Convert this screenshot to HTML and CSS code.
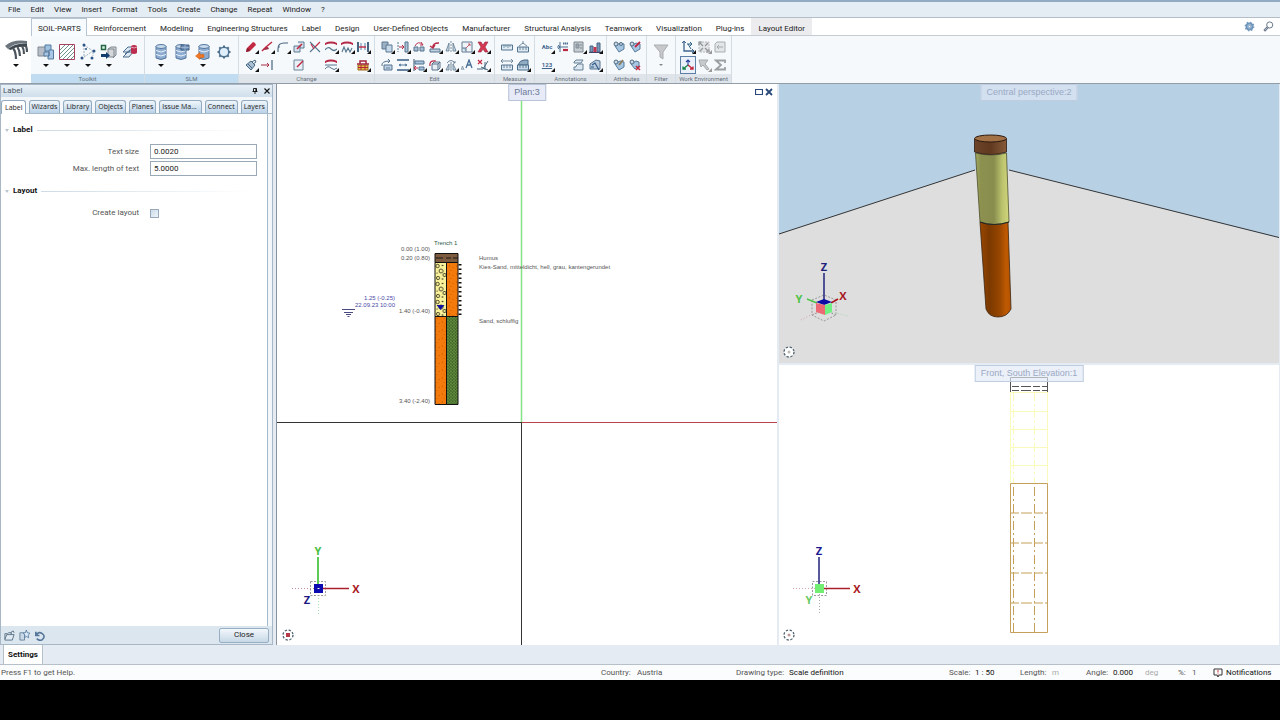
FILE: index.html
```html
<!DOCTYPE html>
<html lang="en">
<head>
<meta charset="utf-8">
<title>Soil parts - Label</title>
<meta name="viewport" content="width=device-width, initial-scale=1">
<link rel="stylesheet" href="styles.css">
</head>
<body>
<svg class="symbols" aria-hidden="true">
  <defs>
    <pattern id="sand" width="7" height="8" patternUnits="userSpaceOnUse"><rect width="7" height="8" fill="#f47a0c"/><circle cx="1.5" cy="2" r=".45" fill="#6b3206"/><circle cx="5" cy="3.6" r=".45" fill="#6b3206"/><circle cx="3" cy="6.3" r=".4" fill="#8a4208"/></pattern>
    <pattern id="silt" width="3" height="3" patternUnits="userSpaceOnUse"><rect width="3" height="3" fill="#618a3c"/><path d="M1 0v1.8M2.5 1.5V3" stroke="#30531f" stroke-width=".8"/></pattern>
    <pattern id="gravel" width="11.5" height="18" patternUnits="userSpaceOnUse" x="435" y="263"><rect width="11.5" height="18" fill="#fbf39a"/><g fill="none" stroke="#38351c" stroke-width=".9"><circle cx="2.500" cy="3" r="1.700"/><circle cx="6" cy="8" r="2"/><circle cx="9.500" cy="12" r="1.600"/><circle cx="3" cy="15" r="1.600"/></g><circle cx="7.500" cy="2.500" r=".7"/><circle cx="2" cy="10" r=".6"/><circle cx="7.500" cy="16" r=".7"/></pattern>
    <linearGradient id="orange3d"><stop offset="0" stop-color="#9a4700"/><stop offset=".3" stop-color="#7b3900"/><stop offset=".62" stop-color="#964500"/><stop offset=".85" stop-color="#c05a02"/><stop offset="1" stop-color="#b35202"/></linearGradient>
    <linearGradient id="green3d"><stop offset="0" stop-color="#a3a95e"/><stop offset=".15" stop-color="#8c9150"/><stop offset=".55" stop-color="#888d4e"/><stop offset=".8" stop-color="#bcc36d"/><stop offset="1" stop-color="#cfd67c"/></linearGradient>
    <linearGradient id="brown3d"><stop offset="0" stop-color="#6c4429"/><stop offset=".5" stop-color="#60391f"/><stop offset="1" stop-color="#875a3a"/></linearGradient>
  </defs>
  <symbol id="blocks" viewBox="0 0 18 18"><path d="M1 4h8v9H1z" fill="#b6bdc6" stroke="#7e8791"/><path d="M8 2h6v6H8z" fill="#9fc1e2" stroke="#54789c"/><path d="M7 9h5v4H7zM12 7h4.500v9H11v-3h1z" fill="#a9c7e4" stroke="#54789c"/></symbol>
  <symbol id="hatch" viewBox="0 0 18 18"><path d="M1.500 1.500h15v15h-15z" fill="#fff" stroke="#a83f5c"/><path d="M2 7l5-5M2 11l9-9M2 15l13-13M5 16L16 5M9 16l7-7M13 16l3-3" stroke="#497a70" stroke-width=".8" fill="none"/></symbol>
  <symbol id="nodes" viewBox="0 0 18 18"><path d="M5 2v12M5 14l9-6M5 2l9 6v5" stroke="#8b9daf" stroke-width=".8" stroke-dasharray="2 1" fill="none"/><g fill="#2b5687"><circle cx="5" cy="2" r="1.500"/><circle cx="3" cy="15" r="1.500"/><circle cx="15" cy="8" r="1.500"/><circle cx="13" cy="15" r="1.500"/><circle cx="7" cy="6" r="1"/></g></symbol>
  <symbol id="transfer" viewBox="0 0 18 18"><path d="M1.500 2.500h4v4h-4z" fill="#d9efe0" stroke="#246748" stroke-width="1.500"/><path d="M8 6l3-2h5v8l-3 3M8 6h6v8H8z" fill="#d4d8db" stroke="#7d868e"/><path d="M1 11h5V9l4 3.500-4 3.500v-2H1z" fill="#123e70"/></symbol>
  <symbol id="layers" viewBox="0 0 18 18"><path d="M2 9l5-5h5l-4 5zM2 14l5-5h5l-4 5zM4 11l5-4" fill="#dce8f2" stroke="#4c6d8e"/><path d="M10 3q3-2 6 0v7q-3 2-6 0z" fill="#bd2d4f"/><path d="M10 4q3 2 6 0" fill="none" stroke="#e0a6b3"/></symbol>
  <symbol id="db" viewBox="0 0 18 18"><path d="M4 3v12q5 3 10 0V3" fill="#8dacd0" stroke="#55779f"/><ellipse cx="9" cy="3.500" rx="5" ry="2" fill="#c7dbec" stroke="#55779f"/><path d="M4 7.500q5 3 10 0M4 11.500q5 3 10 0" stroke="#e8f2fb" fill="none"/></symbol>
  <symbol id="db-table" viewBox="0 0 18 18"><path d="M3 3v12q5 3 10 0V3" fill="#8dacd0" stroke="#55779f"/><ellipse cx="8" cy="3.500" rx="5" ry="2" fill="#c7dbec" stroke="#55779f"/><path d="M3 7.500q5 3 10 0M3 11.500q5 3 10 0" stroke="#e8f2fb" fill="none"/><path d="M8 2h8v5H8z" fill="#6f8fb5" stroke="#3f5f86"/><path d="M8 4.500h8M12 2v5" stroke="#a9c0da" stroke-width=".7"/></symbol>
  <symbol id="db-out" viewBox="0 0 18 18"><path d="M5 3v12q5 3 10 0V3" fill="#8dacd0" stroke="#55779f"/><ellipse cx="10" cy="3.500" rx="5" ry="2" fill="#c7dbec" stroke="#55779f"/><path d="M5 7.500q5 3 10 0" stroke="#e8f2fb" fill="none"/><path d="M10 11.500H6V9.500L1.500 13 6 16.500v-2h4z" fill="#f07825" stroke="#ce5c12" stroke-width=".5"/></symbol>
  <symbol id="gear" viewBox="0 0 18 18"><circle cx="9" cy="9" r="4.800" fill="#deeefa" stroke="#4f7190" stroke-width="1.500"/><path d="M9 2.500V4M9 14v1.500M2.500 9H4M14 9h1.500M4.300 4.300l1.200 1.200M12.500 12.500l1.200 1.200M4.300 13.700l1.200-1.200M12.500 5.500l1.200-1.200" stroke="#4f7190" stroke-width="2"/></symbol>
  <symbol id="pencil" viewBox="0 0 12 12"><path d="M1 11l1-4 6-6q2 0 3 3l-6 6z" fill="#c32843"/><path d="M1 11l1-4q2 0 3 3z" fill="#8a1b2e"/></symbol>
  <symbol id="trim" viewBox="0 0 12 12"><path d="M1 10l4-4 1.500 1.500M5 6l6-5" stroke="#c32843" stroke-width="1.500" fill="none"/><path d="M2 8l5-2 1 2-4 1z" fill="#9d3045"/></symbol>
  <symbol id="fillet" viewBox="0 0 12 12"><path d="M1 11V8q0-6 6-6h4" fill="none" stroke="#45637f" stroke-width="1.100"/><circle cx="2" cy="6" r=".8" fill="#45637f"/></symbol>
  <symbol id="edit-shape" viewBox="0 0 12 12"><path d="M1 5h6v6H1zM5 1h6v6H7" fill="#d6e2ec" stroke="#5b7894"/><path d="M4 8l5-5" stroke="#c32843" stroke-width="1.600"/></symbol>
  <symbol id="split" viewBox="0 0 12 12"><path d="M1 1l10 10M1 11L6 6" stroke="#55768f" stroke-width="1.100"/><path d="M6 6l5-5M2 3l3 5" stroke="#c32843" stroke-width="1.100"/></symbol>
  <symbol id="wave1" viewBox="0 0 12 12"><path d="M0 4V3q6-3 12 0v1" stroke="#b62845" stroke-width="1.800" fill="none"/><path d="M0 9q3-4 6-1t6 0" stroke="#55768f" fill="none" stroke-width="1.200"/></symbol>
  <symbol id="wave2" viewBox="0 0 12 12"><path d="M0 4V3q6-3 12 0v1" stroke="#b62845" stroke-width="1.800" fill="none"/><path d="M1 11l2-5 2 5 2-4 2 4 2-4" stroke="#55768f" fill="none" stroke-width="1.100"/></symbol>
  <symbol id="wave3" viewBox="0 0 12 12"><path d="M0 4V3q6-3 12 0v1" stroke="#b62845" stroke-width="1.800" fill="none"/><path d="M0 6h12M0 10q3-4 6-1t6 0" stroke="#55768f" fill="none"/></symbol>
  <symbol id="stretch" viewBox="0 0 12 12"><path d="M1 1v10M11 1v10" stroke="#466581" stroke-width="2"/><path d="M3 2h2v7H3zM7 2h2v7H7z" fill="#a8bfd3"/><path d="M2 6h7" stroke="#c32843" stroke-width="1.400"/></symbol>
  <symbol id="brush" viewBox="0 0 12 12"><path d="M1 6l5-4 4 4-4 5z" fill="#a9bfd2" stroke="#486885"/><path d="M7 3l3-2 1 2-3 2M3 5l4 4" fill="none" stroke="#486885"/></symbol>
  <symbol id="extend" viewBox="0 0 12 12"><path d="M11 1v10" stroke="#45637f" stroke-width="1.200"/><path d="M0 6h8M6 4l2 2-2 2" fill="none" stroke="#a82d48"/></symbol>
  <symbol id="note" viewBox="0 0 12 12"><path d="M1 1h9v10H1z" fill="#e8eff5" stroke="#6b849b"/><path d="M4 8l6-6" stroke="#c32843" stroke-width="1.500"/></symbol>
  <symbol id="wall" viewBox="0 0 12 12"><path d="M1 6h10v5H1z" fill="#e9bc45" stroke="#976b20"/><path d="M1 8.500h10M4 6v5M8 6v5" stroke="#b12435"/><path d="M3 5V2h6v3M0 5h12" stroke="#a4263c" stroke-width="1.500" fill="none"/></symbol>
  <symbol id="copy" viewBox="0 0 12 12"><path d="M1 1h6v7H1z" fill="#9eb3c5" stroke="#5b7790"/><path d="M5 4h6v7H5z" fill="#c6d9e9" stroke="#5b7790"/></symbol>
  <symbol id="move" viewBox="0 0 12 12"><path d="M1 1v10" stroke="#607d96" stroke-dasharray="2 1"/><path d="M8 1h3v10H8z" fill="#abc1d4" stroke="#55738e"/><path d="M2 6h5M5 4l2 2-2 2" stroke="#b82844" fill="none"/></symbol>
  <symbol id="rotate-copy" viewBox="0 0 12 12"><path d="M1 6h4v4H1zM7 6h4v4H7z" fill="#a9c0d5" stroke="#55738e"/><path d="M2 5q3-6 8-1M8 1l2 3-3 0" fill="none" stroke="#b83751"/></symbol>
  <symbol id="stamp" viewBox="0 0 12 12"><path d="M3 6h8v5H3z" fill="#bed2e4" stroke="#55738e"/><path d="M5 8h4v3H5z" fill="#8faac2"/><path d="M1 7q-1-5 8-5M7 0l2 2-2 2" fill="none" stroke="#55738e"/></symbol>
  <symbol id="rotate" viewBox="0 0 12 12"><path d="M1 8h10v3H1z" fill="#bdd0df" stroke="#55738e"/><path d="M4 7q-1-5 6-5M1 5l3 2 2-3" fill="none" stroke="#b62743" stroke-width="1.300"/></symbol>
  <symbol id="mirror" viewBox="0 0 12 12"><path d="M1 10l3-8v8zM11 10L8 2v8z" fill="#c7d6e2" stroke="#607a91" stroke-width=".8"/><path d="M6 0v12" stroke="#607a91" stroke-width=".8" stroke-dasharray="2 1"/></symbol>
  <symbol id="mirror-copy" viewBox="0 0 12 12"><path d="M1 11l3-6v6zM11 11L8 5v6z" fill="#c7d6e2" stroke="#607a91" stroke-width=".8"/><path d="M6 3v9M2 4q4-5 8 0M8 4h2V2" fill="none" stroke="#607a91" stroke-width=".9"/></symbol>
  <symbol id="scale" viewBox="0 0 12 12"><path d="M1 1h10v10H1z" fill="#eef3f7" stroke="#607a91"/><path d="M1 7h4v4" fill="#b7cddd" stroke="#607a91"/><path d="M5 7l4-4M7 3h2v2" fill="none" stroke="#bf3550" stroke-width=".8"/></symbol>
  <symbol id="delete" viewBox="0 0 12 12"><path d="M1 1h3l2 3 2-3h3L8 6l3 5H8L6 8l-2 3H1l3-5z" fill="#d43850" stroke="#98243a" stroke-width=".6"/></symbol>
  <symbol id="distribute" viewBox="0 0 12 12"><path d="M0 1h12M0 11h12" stroke="#385d83" stroke-width="1.300"/><path d="M2 6h8M4 5L2 6l2 1M8 5l2 1-2 1" fill="none" stroke="#50789a"/></symbol>
  <symbol id="align" viewBox="0 0 12 12"><path d="M1 0v12" stroke="#37536d"/><path d="M2 2h9v3H2zM6 8h5v3H6z" fill="#a9c4dc" stroke="#50718f"/><path d="M1 9h4M3 7L1 9l2 2" stroke="#bf2a45" fill="none"/></symbol>
  <symbol id="cube" viewBox="0 0 12 12"><path d="M3 5l2-2h6v6l-2 2H3zM3 5h6v6M9 5l2-2" fill="#e7eef4" stroke="#56718b"/><path d="M1 7q-1-6 6-5" fill="none" stroke="#bf2a45" stroke-width="1.200"/></symbol>
  <symbol id="text-size" viewBox="0 0 12 12"><path d="M0 11l1.500-4L3 11M1 10h1" fill="none" stroke="#7f93a6" stroke-width=".9"/><path d="M5 9l3-8 3 8M6 6h4" fill="none" stroke="#456c94" stroke-width="1.300"/></symbol>
  <symbol id="xy" viewBox="0 0 12 12"><path d="M1 1l4 4M5 1L1 5" stroke="#c32843" stroke-width="1.200"/><path d="M0 10h6l5-8M4 8l7 3M8 3v8" stroke="#47657f" fill="none"/></symbol>
  <symbol id="ruler" viewBox="0 0 12 12"><path d="M.5 4h11v5H.5z" fill="#e1ebf3" stroke="#55758e"/><path d="M3 4v3M5 4v2M7 4v3M9 4v2" stroke="#55758e" stroke-width=".7"/></symbol>
  <symbol id="ruler-up" viewBox="0 0 12 12"><path d="M.5 6h11v5H.5z" fill="#dce8f2" stroke="#55758e"/><path d="M3 6v3M6 6v3M9 6v3M2 5l4-3 4 3M6 0v3" fill="none" stroke="#55758e" stroke-width=".8"/></symbol>
  <symbol id="ruler-h" viewBox="0 0 12 12"><path d="M.5 6h11v5H.5z" fill="#dce8f2" stroke="#55758e"/><path d="M3 6v3M6 6v3M9 6v3M0 2h12M2 0L0 2l2 2M10 0l2 2-2 2" fill="none" stroke="#55758e" stroke-width=".8"/></symbol>
  <symbol id="ruler-area" viewBox="0 0 12 12"><path d="M1 6q2-5 6-5h4v5z" fill="#91abc2" stroke="#4b6c89"/><path d="M.5 6h11v5H.5z" fill="#c7d9e8" stroke="#4b6c89"/><path d="M3 6v3M6 6v3M9 6v3" stroke="#4b6c89" stroke-width=".8"/></symbol>
  <symbol id="label-line" viewBox="0 0 12 12"><path d="M0 6h11M3 1v10M1 4l2 2-2 2" fill="none" stroke="#4d6f91"/><path d="M6 2.500h5" stroke="#4d6f91" stroke-width="2" stroke-dasharray="1.500 .5"/><path d="M6 9h5" stroke="#b92642" stroke-width="2.200"/></symbol>
  <symbol id="page" viewBox="0 0 12 12"><path d="M1 1h9v10H1z" fill="#c7ccd1" stroke="#7c8890"/><path d="M3 3h3v4H3z" fill="#9aa4ae" stroke="#87929d"/><path d="M7 4h2M7 7h2" stroke="#78858f"/></symbol>
  <symbol id="chart" viewBox="0 0 12 12"><path d="M1 11V5h3v6zM8 11V2h3v9z" fill="#7898ba" stroke="#426384"/><path d="M4.500 11V6h3v5z" fill="#c23350"/><path d="M0 11.500h12" stroke="#446"/></symbol>
  <symbol id="shapes" viewBox="0 0 12 12"><path d="M1 3l2-2h7L8 4H1zM3 7l2-2h5v6H1V8h2z" fill="#dce7ef" stroke="#668096"/></symbol>
  <symbol id="house" viewBox="0 0 12 12"><path d="M1 5l6-4 4 1v8H1z" fill="#b9cbdc" stroke="#577592"/><path d="M3 6l3-2 4 7M2 8h3" stroke="#315b87" stroke-width="1.200" fill="none"/></symbol>
  <symbol id="tag" viewBox="0 0 12 12"><path d="M2 5l4 6 5-3V3L7 2z" fill="#a6c6e1" stroke="#557b9c"/><circle cx="3" cy="3" r="2" fill="#cad7e2" stroke="#4e6c86"/><circle cx="8" cy="3" r="1.500" fill="#cad7e2" stroke="#4e6c86"/></symbol>
  <symbol id="tag-edit" viewBox="0 0 12 12"><path d="M2 5l4 6 5-3V3L7 2z" fill="#a6c6e1" stroke="#557b9c"/><circle cx="3" cy="3" r="2" fill="#cad7e2" stroke="#4e6c86"/><path d="M6 6l5-5" stroke="#c32843" stroke-width="1.800"/></symbol>
  <symbol id="tag-gold" viewBox="0 0 12 12"><path d="M2 5l4 6 5-3V3L7 2z" fill="#a6c6e1" stroke="#557b9c"/><circle cx="3" cy="3" r="2" fill="#cad7e2" stroke="#4e6c86"/><path d="M6 6l4-5" stroke="#8d7956" stroke-width="1.800"/></symbol>
  <symbol id="tag-del" viewBox="0 0 12 12"><path d="M2 5l4 5 4-3V3L7 2z" fill="#a6c6e1" stroke="#557b9c"/><circle cx="3" cy="3" r="2" fill="#cad7e2" stroke="#4e6c86"/><path d="M7 7l4 4M11 7l-4 4" stroke="#c32843" stroke-width="1.500"/></symbol>
  <symbol id="funnel" viewBox="0 0 18 18"><path d="M2 2h14l-5 7v7l-3-2V9z" fill="#c6c8ca" stroke="#a9adb0"/></symbol>
  <symbol id="axes" viewBox="0 0 12 12"><path d="M2 0v10h10" stroke="#3d658c" stroke-width="1.300" fill="none"/><path d="M5 3h5M8 1l2 2-2 2M6 3l3 5" stroke="#2a6186" fill="none"/><path d="M0 2l2-2 2 2M10 8l2 2-2 2" fill="none" stroke="#3d658c"/></symbol>
  <symbol id="arrows-gray" viewBox="0 0 12 12"><path d="M1 1h10v10H1z" fill="#e4e5e6" stroke="#b4b7ba" stroke-dasharray="2 1"/><path d="M2 2l3 3M10 2L7 5M2 10l3-3M10 10L7 7M1 4V1h3M11 8v3H8" stroke="#8f9498" stroke-width="1.200" fill="none"/></symbol>
  <symbol id="page-gray" viewBox="0 0 12 12"><path d="M3 1h8v10H1V3z" fill="#e3e5e6" stroke="#a9adb0"/><path d="M9 6H3M5 4L3 6l2 2" fill="none" stroke="#a5a9ad"/></symbol>
  <symbol id="tripod" viewBox="0 0 12 12"><path d="M6 7V1M4 3l2-2 2 2" fill="none" stroke="#253fa0" stroke-width="1.100"/><path d="M6 6l-5 4M1 7.500V10h3" fill="none" stroke="#18834c" stroke-width="1.300"/><path d="M6 6l5 4M11 7.500V10H8" fill="none" stroke="#c22438" stroke-width="1.300"/></symbol>
  <symbol id="cursor-gray" viewBox="0 0 12 12"><path d="M1 1h9L7 5l4 5-2 1-4-5-2 2z" fill="#c7cacc" stroke="#a6aaad"/></symbol>
  <symbol id="sigma" viewBox="0 0 12 12"><path d="M11 4V1.500H2L7 6l-5 4.500h9V8" fill="none" stroke="#9a9fa3" stroke-width="1.800"/></symbol>
  <symbol id="ring" viewBox="0 0 12 12"><circle cx="6" cy="6" r="5" fill="#fff" stroke="#506370" stroke-width="1.300" stroke-dasharray="2.330 1.600"/></symbol>
</svg>

<header class="top">
  <nav class="menu" aria-label="Main menu">
    <button>File</button><button>Edit</button><button>View</button><button>Insert</button><button>Format</button><button>Tools</button><button>Create</button><button>Change</button><button>Repeat</button><button>Window</button><button>?</button>
  </nav>
  <div class="ribbon">
    <button class="app" aria-label="Application menu"><svg viewBox="0 0 24 20"><path d="M1 6Q9-1 23 1v3Q11 2 4 9z" fill="#6c757e"/><path d="M4 9Q11 3 23 4v3Q12 6 7 10z" fill="#3f474f"/><path d="M9 8q3 4 3 11M13.500 7q2.500 4 2.500 9M18 6q2 3 2 8M22 6q1 3 1 6" fill="none" stroke="#4c555e" stroke-width="2.200"/></svg><i class="caret"></i></button>
    <div class="ribbon-main">
      <div class="tabs">
        <button class="tab active">SOIL-PARTS</button><button class="tab">Reinforcement</button><button class="tab">Modeling</button><button class="tab">Engineering Structures</button><button class="tab">Label</button><button class="tab">Design</button><button class="tab">User-Defined Objects</button><button class="tab">Manufacturer</button><button class="tab">Structural Analysis</button><button class="tab">Teamwork</button><button class="tab">Visualization</button><button class="tab">Plug-ins</button><button class="tab layout">Layout Editor</button>
        <div class="tools"><button aria-label="Options"><svg viewBox="0 0 18 18"><circle cx="9" cy="9" r="5" fill="#b5cde1" stroke="#6f95ba" stroke-width="3"/><circle cx="9" cy="9" r="7" fill="none" stroke="#6f95ba" stroke-width="2" stroke-dasharray="2.500 3"/><circle cx="9" cy="9" r="2" fill="#eef5fb" stroke="#5c83aa"/></svg></button><button aria-label="Search"><svg viewBox="0 0 18 18"><circle cx="11" cy="6.500" r="5" fill="#fff" stroke="#68788b" stroke-width="1.600"/><path d="M8 10l-6 6" stroke="#68788b" stroke-width="4"/><path d="M7.500 10.500L3 15" stroke="#dce4ec"/></svg></button></div>
      </div>
      <div class="groups">
        <section class="group blue"><div class="bigs">
          <button aria-label="Parts"><svg><use href="#blocks"/></svg><i class="caret"></i></button><button aria-label="Hatching"><svg><use href="#hatch"/></svg><i class="caret"></i></button><button aria-label="Points"><svg><use href="#nodes"/></svg><i class="caret"></i></button><button aria-label="Transfer"><svg><use href="#transfer"/></svg><i class="caret"></i></button><button aria-label="Layers"><svg><use href="#layers"/></svg></button>
        </div><h2>Toolkit</h2></section>
        <section class="group blue slm"><div class="bigs">
          <button aria-label="Database"><svg><use href="#db"/></svg><i class="caret"></i></button><button aria-label="Database table"><svg><use href="#db-table"/></svg></button><button aria-label="Export"><svg><use href="#db-out"/></svg><i class="caret"></i></button><button aria-label="Settings"><svg><use href="#gear"/></svg></button>
        </div><h2>SLM</h2></section>
        <section class="group"><div class="smalls c8">
          <button class="more" aria-label="Modify"><svg><use href="#pencil"/></svg></button><button class="more" aria-label="Trim"><svg><use href="#trim"/></svg></button><button class="more" aria-label="Fillet"><svg><use href="#fillet"/></svg></button><button aria-label="Edit shape"><svg><use href="#edit-shape"/></svg></button><button aria-label="Split"><svg><use href="#split"/></svg></button><button class="more" aria-label="Line"><svg><use href="#wave1"/></svg></button><button class="more" aria-label="Polyline"><svg><use href="#wave2"/></svg></button><button class="more" aria-label="Stretch"><svg><use href="#stretch"/></svg></button>
          <button class="more" aria-label="Format brush"><svg><use href="#brush"/></svg></button><button aria-label="Extend"><svg><use href="#extend"/></svg></button><span></span><button aria-label="Edit note"><svg><use href="#note"/></svg></button><span></span><button class="more" aria-label="Curve"><svg><use href="#wave3"/></svg></button><span></span><button class="more" aria-label="Wall"><svg><use href="#wall"/></svg></button>
        </div><h2>Change</h2></section>
        <section class="group"><div class="smalls c7">
          <button class="more" aria-label="Copy"><svg><use href="#copy"/></svg></button><button class="more" aria-label="Move"><svg><use href="#move"/></svg></button><button aria-label="Copy and rotate"><svg><use href="#rotate-copy"/></svg></button><button class="more" aria-label="Rotate"><svg><use href="#rotate"/></svg></button><button class="more" aria-label="Mirror"><svg><use href="#mirror"/></svg></button><button class="more" aria-label="Scale"><svg><use href="#scale"/></svg></button><button class="more" aria-label="Delete"><svg><use href="#delete"/></svg></button>
          <button aria-label="Copy array"><svg><use href="#stamp"/></svg></button><button class="more" aria-label="Distribute"><svg><use href="#distribute"/></svg></button><button class="more" aria-label="Align"><svg><use href="#align"/></svg></button><button class="more" aria-label="Rotate 3D"><svg><use href="#cube"/></svg></button><button class="more" aria-label="Mirror copy"><svg><use href="#mirror-copy"/></svg></button><button aria-label="Text size"><svg><use href="#text-size"/></svg></button><button class="more" aria-label="Coordinates"><svg><use href="#xy"/></svg></button>
        </div><h2>Edit</h2></section>
        <section class="group"><div class="smalls c2">
          <button aria-label="Measure"><svg><use href="#ruler"/></svg></button><button aria-label="Measure coordinates"><svg><use href="#ruler-up"/></svg></button><button aria-label="Dimension"><svg><use href="#ruler-h"/></svg></button><button class="more" aria-label="Area"><svg><use href="#ruler-area"/></svg></button>
        </div><h2>Measure</h2></section>
        <section class="group"><div class="smalls c4">
          <button class="more word">Abc</button><button aria-label="Label line"><svg><use href="#label-line"/></svg></button><button class="more" aria-label="Report"><svg><use href="#page"/></svg></button><button class="more" aria-label="Chart"><svg><use href="#chart"/></svg></button><button class="more word line">123</button><span></span><button aria-label="Shapes"><svg><use href="#shapes"/></svg></button><button class="more" aria-label="Section"><svg><use href="#house"/></svg></button>
        </div><h2>Annotations</h2></section>
        <section class="group"><div class="smalls c2">
          <button aria-label="Attributes"><svg><use href="#tag"/></svg></button><button aria-label="Edit attributes"><svg><use href="#tag-edit"/></svg></button><button aria-label="Match attributes"><svg><use href="#tag-gold"/></svg></button><button aria-label="Remove attributes"><svg><use href="#tag-del"/></svg></button>
        </div><h2>Attributes</h2></section>
        <section class="group filter"><div class="bigs"><button aria-label="Filter"><svg><use href="#funnel"/></svg><i class="caret gray"></i></button></div><h2>Filter</h2></section>
        <section class="group"><div class="smalls c3">
          <button class="more" aria-label="Axes"><svg><use href="#axes"/></svg></button><button class="more off" aria-label="Zoom"><svg><use href="#arrows-gray"/></svg></button><button aria-label="Previous"><svg><use href="#page-gray"/></svg></button><button class="on" aria-label="Tripod"><svg><use href="#tripod"/></svg></button><button class="more off" aria-label="Select"><svg><use href="#cursor-gray"/></svg></button><button aria-label="Sum"><svg><use href="#sigma"/></svg></button>
        </div><h2>Work Environment</h2></section>
      </div>
    </div>
  </div>
</header>

<main class="workspace">
  <aside class="panel">
    <div class="panel-title"><span>Label</span><button aria-label="Pin"><svg viewBox="0 0 8 8"><path d="M2.500 4.500v-3h3v3M1.500 4.500h5M4 4.500V7" fill="none" stroke="#111" stroke-width=".9"/><path d="M4.500 1.500h1v3h-1z"/></svg></button><button aria-label="Close panel"><svg viewBox="0 0 8 8"><path d="M1.500 1.500l5 5M6.500 1.500l-5 5" stroke="#111" stroke-width="1.100"/></svg></button></div>
    <div class="panel-tabs"><button class="active">Label</button><button>Wizards</button><button>Library</button><button>Objects</button><button>Planes</button><button class="wide">Issue Ma...</button><button>Connect</button><button>Layers</button></div>
    <form class="page" id="props">
      <h3>Label</h3>
      <div class="fields">
        <label for="size">Text size</label><input id="size" type="text" value="0.0020">
        <label for="max">Max. length of text</label><input id="max" type="text" value="5.0000">
      </div>
      <h3>Layout</h3>
      <div class="fields check"><label for="create">Create layout</label><input id="create" type="checkbox"></div>
    </form>
    <div class="panel-foot">
      <button aria-label="Load"><svg viewBox="0 0 12 12"><path d="M1 10V4h3l1-1h3v2M1 10l2-5h8l-2 6H1zM7 3l3-2 1 2" fill="#dfe9f2" stroke="#5a7084"/></svg></button><button aria-label="Save as favorite"><svg viewBox="0 0 12 12"><path d="M1 3h5v8H1z" fill="#c8d8e6" stroke="#6b8399"/><path d="M8 0l1 3 3 .5-2 2 .5 3L8 7 6 8.500l.5-3-2-2L7 3z" fill="#dcebf8" stroke="#53789b" stroke-width=".9"/></svg></button><button aria-label="Reset"><svg viewBox="0 0 12 12"><path d="M2 2v4h4M2.500 5.500Q5 1 9 4t0 6.500q-3 2-6-1" fill="none" stroke="#56779a" stroke-width="1.800"/></svg></button>
      <button class="close">Close</button>
    </div>
  </aside>

  <section class="view plan">
    <svg class="scene" viewBox="277 84 500 561" preserveAspectRatio="xMidYMid slice">
      <path d="M521.500 84v338" stroke="#84e384" stroke-width="1.500"/><path d="M521 422.500h256" stroke="#b8444e"/><path d="M277 422.500h244.500V645" fill="none" stroke="#333"/>
      <g stroke="#111">
        <path d="M435 253.500h23v9h-23z" fill="#7b5a3d"/><path d="M436 258h7m3 0h5m2 0h5" stroke-width=".9"/>
        <path d="M435 262.500h11.500v54H435z" fill="url(#gravel)"/><path d="M446.500 262.500H458v54h-11.500z" fill="url(#sand)"/>
        <path d="M435 316.500h11.500v88H435z" fill="url(#sand)"/><path d="M446.500 316.500H458v88h-11.500z" fill="url(#silt)"/>
        <path d="M460 264v51" stroke-width="3" stroke-dasharray="1.500 3"/>
      </g>
      <path d="M436.500 305h8l-4 5z" fill="#11119c"/>
      <path d="M342 309.500h13M344 312.500h9M346 314.500h5M347.500 316.500h2" stroke="#4a4a80"/>
      <g class="note"><text x="434" y="245" class="green">Trench 1</text>
      <g text-anchor="end"><text x="430" y="251">0.00 (1.00)</text><text x="430" y="260">0.20 (0.80)</text><text x="430" y="313">1.40 (-0.40)</text><text x="430" y="403">3.40 (-2.40)</text><text x="395" y="300" class="navy">1.25 (-0.25)</text><text x="395" y="307" class="navy">22.09.23 10:00</text></g>
      <text x="479" y="260">Humus</text><text x="479" y="269">Kies-Sand, mitteldicht, hell, grau, kantengerundet</text><text x="479" y="323">Sand, schluffig</text></g>
      <path d="M292 588.500h26" stroke="#c98a93" stroke-dasharray="1 2"/><path d="M318.500 589v26" stroke="#a5dfaa" stroke-dasharray="1 2"/><path d="M310.500 581.500h15v14h-15z" fill="none" stroke="#999" stroke-dasharray="2 1.500"/><path d="M318 557v28" stroke="#5dcb58" stroke-width="2"/><path d="M322 588.500h27" stroke="#a9202c" stroke-width="1.500"/><path d="M314 584h9v9h-9z" fill="#0b0bb0"/><path d="M317.500 588h2v1h-2z" fill="#fff"/>
      <g class="axis"><text x="318" y="555" fill="#49c043">Y</text><text x="356" y="593" fill="#a81622">X</text><text x="307" y="604" fill="#1b1780">Z</text></g>
      <use href="#ring" x="282" y="629" width="12" height="12"/><path d="M286 633h4v4h-4z" fill="#b53a4a"/>
    </svg>
    <div class="caption">Plan:3</div>
    <div class="win"><button aria-label="Maximize"><svg viewBox="0 0 8 8"><path d="M.5 1.500h7v5h-7z" fill="none" stroke="#29497b" stroke-width="1.200"/></svg></button><button aria-label="Close view"><svg viewBox="0 0 8 8"><path d="M1 1l6 6M7 1L1 7" stroke="#29497b" stroke-width="1.800"/></svg></button></div>
  </section>
  <div class="stack">
    <section class="view persp">
      <svg class="scene" viewBox="779 84 500 279" preserveAspectRatio="xMidYMid slice">
        <path d="M779 84h500v279H779z" fill="#b8d0e4"/><path d="M779 234l196-64 34 0 270 68v125H779z" fill="#dedede"/><path d="M779 234l196-64M1009 170l270 67.500" fill="none" stroke="#333"/>
        <path d="M980 222q13 5 28 0l3 87q-4 8-13 8t-12-8z" fill="url(#orange3d)" stroke="#3a2410" stroke-width=".8"/>
        <path d="M975.500 153q16 4 31 0l2.500 69q-14 5-29 0z" fill="url(#green3d)" stroke="#4b4e2b" stroke-width=".8"/>
        <path d="M974.500 139v13q16 5 32 0v-13z" fill="url(#brown3d)" stroke="#2c1a10" stroke-width=".8"/><ellipse cx="990.500" cy="138.500" rx="16" ry="3.500" fill="#a27146" stroke="#2c1a10"/><path d="M980 222q13 5 29 0" fill="none" stroke="#222"/>
        <path d="M812 300l12-5 12 5v15l-12 6-12-6zM812 315l12-5 12 5" fill="none" stroke="#999" stroke-dasharray="2 1.500"/><path d="M801 320l16-8" stroke="#d5a0a6" stroke-dasharray="1 2"/><path d="M832 312l16 4" stroke="#a9d8ad" stroke-dasharray="1 2"/><path d="M807 299l10 4" stroke="#4fc348" stroke-width="1.500"/><path d="M831 303l7-4" stroke="#a81622" stroke-width="1.500"/><path d="M824 273v30" stroke="#20207c" stroke-width="1.500"/>
        <path d="M816 302l8-3 8 3-8 3z" fill="#0c0ca5"/><path d="M816 303l9 2v10l-9-3z" fill="#ec6873"/><path d="M825 305l7-2v9l-7 3z" fill="#72ef83"/>
        <g class="axis"><text x="824" y="271" fill="#20207c">Z</text><text x="799" y="303" fill="#4fc348">Y</text><text x="843" y="300" fill="#a81622">X</text></g>
        <use href="#ring" x="783" y="346" width="12" height="12"/><circle cx="789" cy="352" r="1.500" fill="#bbb"/>
      </svg>
      <div class="caption faded">Central perspective:2</div>
    </section>
    <section class="view front">
      <svg class="scene" viewBox="779 365 500 280" preserveAspectRatio="xMidYMid slice">
        <path d="M1010.500 377.500h37V392M1010.500 377.500V392" fill="none" stroke="#555"/><path d="M1012 381.500h36M1012 386.500h36M1012 390.500h36" stroke="#555" stroke-dasharray="7 2 10 2"/>
        <g fill="none" stroke="#fafabb"><path d="M1010.500 392v91M1047.500 392v91M1010 392.500h37M1010 411.500h37M1010 429.500h37M1010 447.500h37M1010 465.500h37"/><path d="M1013.500 392v91M1034.500 392v91" stroke-dasharray="9 3 2 3"/></g>
        <g fill="none" stroke="#c4a05a"><path d="M1010.500 483.500h37v149h-37z"/><path d="M1010 513h37M1010 543h37M1010 573h37M1010 603h37" stroke-dasharray="9 2 11 2"/><path d="M1013.500 484v149M1034.500 484v149" stroke-dasharray="9 3 2 3" stroke-dashoffset="-3"/></g>
        <path d="M793 588.500h24" stroke="#d6a3aa" stroke-dasharray="1 2"/><path d="M819.500 594v21" stroke="#aaa" stroke-dasharray="1 2"/><path d="M812.500 581.500h14v14h-14z" fill="none" stroke="#999" stroke-dasharray="2 1.500"/><path d="M819 557v28" stroke="#20207c" stroke-width="1.500"/><path d="M824 588.500h26" stroke="#a9202c" stroke-width="1.500"/><path d="M815 584h9v9h-9z" fill="#72ef72"/>
        <g class="axis"><text x="819" y="555" fill="#1b1790">Z</text><text x="857" y="593" fill="#a81622">X</text><text x="809" y="604" fill="#6acb65">Y</text></g>
        <use href="#ring" x="783" y="629" width="12" height="12"/><circle cx="789" cy="635" r="1.500" fill="#b99"/>
      </svg>
      <div class="caption faded">Front, South Elevation:1</div>
    </section>
  </div>
</main>

<div class="dock"><button>Settings</button></div>
<footer class="status">
  <span>Press F1 to get Help.</span><span>Country:</span><span>Austria</span><span>Drawing type:</span><span class="dark">Scale definition</span><span>Scale:</span><span class="dark">1 : 50</span><span>Length:</span><span class="dim">m</span><span>Angle:</span><span class="dark">0.000</span><span class="dim">deg</span><span>%:</span><span>1</span><button><svg viewBox="0 0 10 10"><path d="M1 1h8v6H6L5 9 4 7H1z" fill="#fff" stroke="#333"/><path d="M5 2v2.500M5 5.500v1" stroke="#b33"/></svg>Notifications</button>
</footer>
<div class="black"></div>
</body>
</html>
```
FILE: styles.css
```css
* { box-sizing: border-box; }
html, body { height: 100%; }
body {
  margin: 0;
  display: flex;
  flex-direction: column;
  background: #e4ebf3;
  color: #222;
  font: 8px/10px Roboto, "Noto Sans", sans-serif;
  overflow: hidden;
}
button, input { font: inherit; color: inherit; margin: 0; padding: 0; border: 0; background: none; }
button { white-space: nowrap; cursor: default; }
button svg { display: block; }
h2, h3 { margin: 0; font: inherit; }
.symbols { position: absolute; width: 0; height: 0; }

.top { flex: none; border-top: 2px solid #92abc3; }
.menu { display: flex; gap: 10px; height: 16px; padding-left: 8px; border-bottom: 1px solid #b5bdc6; background: #e5edf4; }
.ribbon { display: flex; height: 66px; border-bottom: 1px solid #929da8; background: #f6f9fb; }
.app { width: 31px; background: #fff; display: flex; flex-direction: column; align-items: center; padding-top: 22px; gap: 4px; }
.app svg { width: 24px; height: 20px; }
.ribbon-main { flex: 1; min-width: 0; display: flex; flex-direction: column; }
.tabs { display: flex; height: 18px; background: #fff; border-bottom: 1px solid #c4ccd4; }
.tab { padding: 4px 7px 0; color: #222; }
.tab.active { height: 18px; padding: 3px 5px 0 6px; border: 1px solid #b5c5d5; border-bottom: 0; background: #f8fbfd; }
.tab.layout { background: #ececee; }
.tools { margin-left: auto; display: flex; align-items: center; gap: 8px; padding-right: 6px; }
.tools svg { width: 11px; height: 11px; }
.groups { flex: 1; display: flex; }
.group { display: flex; flex-direction: column; border-right: 1px solid #d4dce4; }
.group h2 { height: 9px; line-height: 9px; text-align: center; background: #dfe4ea; color: #66717c; white-space: nowrap; font-size: 6px; }
.group.blue h2 { background: #c1dbf0; }
.bigs { flex: 1; display: flex; padding: 7px 4px 0; }
.slm .bigs { padding-left: 5px; }
.bigs button { width: 21px; display: flex; flex-direction: column; align-items: center; gap: 3px; }
.bigs svg { width: 18px; height: 18px; }
.filter .bigs { padding-left: 3px; padding-right: 4px; }
.caret { border: 3px solid transparent; border-top-color: #111; border-bottom: 0; }
.caret.gray { border-width: 2px; border-bottom: 0; border-top-color: #888; }
.smalls { flex: 1; display: grid; grid-template-rows: 18px 18px; padding: 2px 3px 0 4px; }
.c2 { grid-template-columns: repeat(2, 16px); }
.c3 { grid-template-columns: repeat(3, 16px); }
.c4 { grid-template-columns: repeat(4, 16px); }
.c7 { grid-template-columns: repeat(7, 16px); }
.c8 { grid-template-columns: repeat(8, 16px); }
.smalls button { position: relative; display: flex; align-items: center; justify-content: center; }
.smalls svg { width: 12px; height: 12px; }
.more::after { content: ""; position: absolute; right: 0; bottom: 2px; border: 2px solid #111; border-top-color: transparent; border-left-color: transparent; }
.more.off::after { border-right-color: #999; border-bottom-color: #999; }
.smalls .word { font-weight: 700; font-size: 6px; color: #3f658c; }
.smalls .word.line { text-decoration: underline; }
.smalls .on { border: 1px solid #5d7fa5; background: #eaf1fa; }

.workspace { flex: 1; min-height: 0; display: flex; }
.panel { flex: none; width: 273px; margin-right: 3px; display: flex; flex-direction: column; border: 1px solid #a7b7c6; background: #f4f7fa; }
.panel-title { display: flex; align-items: center; gap: 4px; height: 12px; padding: 0 1px 0 2px; background: linear-gradient(#e9f1f8, #cfdfeb); color: #4a545e; }
.panel-title span { flex: 1; }
.panel-title svg { width: 8px; height: 8px; }
.panel-tabs { display: flex; gap: 3px; height: 17px; padding: 3px 0 0; border-bottom: 1px solid #a7bac9; font: 7px/10px "Open Sans", "Noto Sans", sans-serif; }
.panel-tabs button { padding: 0 2px; border: 1px solid #93abc1; border-bottom: 0; border-radius: 3px 3px 0 0; background: linear-gradient(#f0f6fb, #b9d2e8); }
.panel-tabs .active { height: 14px; padding-left: 3px; background: #fff; }
.panel-tabs .wide { padding-right: 4px; }
.page { flex: 1; padding: 10px 14px 0 4px; margin-right: 4px; border-right: 1px solid #a7bac9; background: #fff; }
.page h3 { display: flex; align-items: center; gap: 4px; height: 12px; font-weight: 700; color: #111; }
.page h3::before { content: ""; border: 2px solid transparent; border-top: 3px solid #b9c4ce; border-bottom: 0; }
.page h3::after { content: ""; flex: 1; height: 1px; background: linear-gradient(90deg, #cddbe5, transparent); }
.fields { display: grid; grid-template-columns: 134px 107px; column-gap: 11px; row-gap: 2px; padding: 8px 0 9px; align-items: center; }
.fields label { text-align: right; color: #555; }
.fields input[type="text"] { width: 100%; height: 15px; padding: 0 3px; border: 1px solid #9aa9b7; background: #fff; }
.fields.check { padding-top: 11px; }
.fields input[type="checkbox"] { appearance: none; width: 9px; height: 9px; border: 1px solid #97a9ba; background: linear-gradient(135deg, #cddbe8, #eff5fa); }
.panel-foot { display: flex; align-items: center; gap: 4px; height: 18px; padding: 0 3px; background: #dbe6ef; }
.panel-foot svg { width: 11px; height: 11px; }
.panel-foot .close { width: 50px; height: 15px; margin-left: auto; border: 1px solid #97aec3; border-radius: 2px; background: linear-gradient(#f2f7fb, #c7d8e7); }

.view { position: relative; flex: 1; min-width: 0; min-height: 0; overflow: hidden; background: #fff; }
.plan { border-left: 1px solid #8a949e; }
.scene { display: block; width: 100%; height: 100%; }
.stack { flex: 1; min-width: 0; display: flex; flex-direction: column; gap: 2px; margin: 0 1px 0 2px; }
.stack .persp { flex-grow: 279; }
.stack .front { flex-grow: 280; }
.caption { position: absolute; top: 0; left: 50%; transform: translateX(-50%); height: 17px; padding: 0 5px; border: 1px solid #b9c4d9; background: #e6ebf7; color: #6b7a98; font: 9px/15px "Liberation Sans", sans-serif; white-space: nowrap; }
.caption.faded { color: #9ba9c4; background: rgba(224, 232, 246, .65); border-color: #c0cde0; }
.win { position: absolute; top: 4px; right: 4px; display: flex; gap: 2px; }
.win svg { width: 8px; height: 8px; }
.note { font: 6px "Liberation Sans", sans-serif; fill: #555; }
.note .green { fill: #2d5b48; }
.note .navy { fill: #4a4aa8; }
.axis { font: 700 11px "Open Sans", sans-serif; text-anchor: middle; }

.dock { flex: none; height: 20px; padding-left: 3px; border-bottom: 1px solid #b7c0c8; background: #e4ebf2; }
.dock button { height: 19px; padding: 0 4px; border: 1px solid #b7c0c8; border-width: 0 1px; background: #fff; font-weight: 700; color: #111; }
.status { flex: none; height: 15px; display: grid; grid-template-columns: 1fr 36px 99px 53px 160px 26px 45px 32px 34px 27px 32px 33px 14px 21px 67px; align-items: center; padding-left: 1px; background: #fbfcfd; color: #555; white-space: nowrap; }
.status .dark, .status button { color: #111; }
.status .dim { color: #aaa; }
.status button { display: flex; align-items: center; gap: 3px; }
.status svg { width: 10px; height: 10px; }
.black { flex: none; height: 40px; background: #000; }
```
